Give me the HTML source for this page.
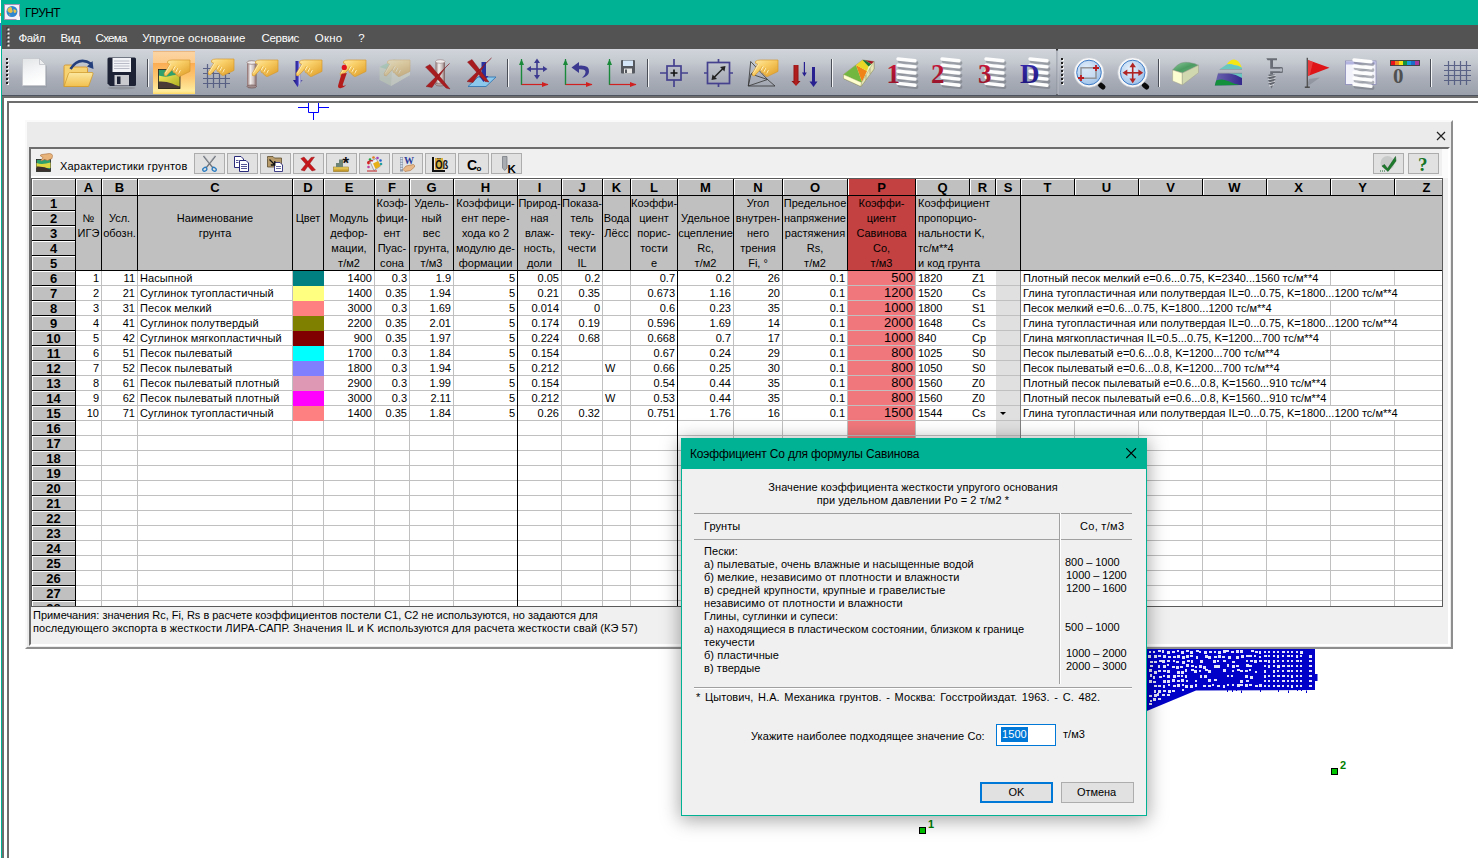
<!DOCTYPE html>
<html lang="ru"><head><meta charset="utf-8"><title>ГРУНТ</title>
<style>
html,body{margin:0;padding:0;}
body{width:1478px;height:858px;overflow:hidden;position:relative;background:#fff;font-family:"Liberation Sans",sans-serif;font-size:11px;color:#000;}
div,span{box-sizing:border-box;}
.abs{position:absolute;}
#title{position:absolute;left:1px;top:0;width:1477px;height:25px;background:#00b294;}
#title .t{position:absolute;left:24px;top:6px;font-size:12px;line-height:15px;color:#000;letter-spacing:-0.55px;}
#menu{position:absolute;left:2px;top:25px;width:1476px;height:24px;background:#535353;color:#fff;font-size:11.5px;}
#menu span{position:absolute;top:5.500px;line-height:14px;white-space:nowrap;}
#tb{position:absolute;left:2px;top:49px;width:1476px;height:47px;background:linear-gradient(#d6dae0 0,#cfd3d9 4%,#c4c9d0 28%,#a9aeb8 62%,#9aa0ab 100%);}
#lb{position:absolute;left:1px;top:25px;width:1px;height:833px;background:#00b294;}
.grip{position:absolute;width:3px;background-image:repeating-linear-gradient(#222 0,#222 2px,transparent 2px,transparent 4px);}
#mdi{position:absolute;left:2px;top:96px;width:1476px;height:762px;background:#fff;border-left:2px solid #6d6d6d;border-top:2px solid #6d6d6d;}
#mdi2{position:absolute;left:7px;top:101px;width:1471px;height:757px;background:#fff;border-left:2px solid #6d6d6d;border-top:2px solid #6d6d6d;}
#frame{position:absolute;left:25px;top:120px;width:1428px;height:529px;background:#ebebec;border:2px solid;border-color:#fafafa #8e8e8e #8e8e8e #fafafa;}
#inner{position:absolute;left:29px;top:147px;width:1421px;height:499px;border:2px solid;border-color:#6d6d6d #fff #fff #6d6d6d;background:#f0f0f0;}
.gb{position:absolute;top:153px;width:31px;height:21px;background:#e1e1e1;border:1px solid #adadad;}
#grid{position:absolute;left:31px;top:178px;width:1412px;height:429px;overflow:hidden;background:#fff;}
#grid div{position:absolute;}
.hc{background:#c0c0c0;}
.hl{font-weight:bold;font-size:13px;text-align:center;line-height:15px;}
.ht{font-size:11px;text-align:center;line-height:15px;white-space:nowrap;}
.c{font-size:11px;line-height:15px;height:15px;white-space:nowrap;}
.r{text-align:right;}
.vl{width:1px;background:#c0c0c0;}
.hline{height:1px;background:#c0c0c0;}
.bl{background:#000;}
#notes{position:absolute;left:31px;top:607px;width:1417px;height:37px;background:#f0f0f0;font-size:11px;line-height:13px;padding:2px 0 0 2px;white-space:nowrap;}
#dlg{position:absolute;left:681px;top:438px;width:466px;height:378px;background:#f0f0f0;border:1px solid #00b294;box-shadow:0 3px 18px 1px rgba(0,0,0,.36);}
#dlg .tt{position:absolute;left:0;top:0;width:464px;height:30px;background:#00b294;}
#dlg .tt span{position:absolute;left:8px;top:8px;font-size:12px;line-height:14px;letter-spacing:-0.18px;}
#dlg div,#dlg span{position:absolute;white-space:nowrap;}
.dl{font-size:11px;line-height:13px;letter-spacing:0.07px;}
</style></head><body>

<div id="title"><span class="t">ГРУНТ</span>
<svg class="abs" style="left:3px;top:4px" width="16" height="16" viewBox="0 0 16 16"><rect x="0.5" y="0.5" width="15" height="15" fill="#f4f0f6" stroke="#a78fb5"/><circle cx="8" cy="7.500" r="5.500" fill="#2f86cf"/><path d="M3.500 5.500c1-2 3-3 4-2 1 1 0 2 1 3s-1 2.500-2 2.500-2-1-3-2z" fill="#e8c04a"/><path d="M9.500 5c1 0 3 1 3 2s-1 2-2 2-1-3-1-4z" fill="#e8c04a"/><path d="M5 10c1 0 1.500 1 1 2z" fill="#e8c04a"/><path d="M12 16l4-4v4z" fill="#f4f0f6"/></svg>
</div>
<div id="lb"></div><div class="abs" style="left:0;top:23px;width:1px;height:23px;background:#2a78d8"></div><div class="abs" style="left:0;top:13px;width:1px;height:3px;background:#f0a030"></div>
<div id="menu"><svg style="position:absolute;left:4px;top:2px" width="4" height="22" viewBox="0 0 4 22"><rect x="0.500" y="0.5" width="2" height="2" fill="#2a2a2a"/><rect x="1.500" y="1.5" width="2" height="2" fill="#f0f0f0"/><rect x="0.500" y="4.5" width="2" height="2" fill="#2a2a2a"/><rect x="1.500" y="5.5" width="2" height="2" fill="#f0f0f0"/><rect x="0.500" y="8.5" width="2" height="2" fill="#2a2a2a"/><rect x="1.500" y="9.5" width="2" height="2" fill="#f0f0f0"/><rect x="0.500" y="12.5" width="2" height="2" fill="#2a2a2a"/><rect x="1.500" y="13.5" width="2" height="2" fill="#f0f0f0"/><rect x="0.500" y="16.5" width="2" height="2" fill="#2a2a2a"/><rect x="1.500" y="17.5" width="2" height="2" fill="#f0f0f0"/></svg>
<span style="left:16.5px;letter-spacing:-0.45px">Файл</span>
<span style="left:58.4px;letter-spacing:-0.33px">Вид</span>
<span style="left:93.6px;letter-spacing:-0.70px">Схема</span>
<span style="left:140.2px;letter-spacing:0.12px">Упругое основание</span>
<span style="left:259.5px;letter-spacing:-0.31px">Сервис</span>
<span style="left:312.7px;letter-spacing:0.27px">Окно</span>
<span style="left:356.2px;letter-spacing:0.00px">?</span>
</div>
<div id="tb"><svg style="position:absolute;left:0;top:0" width="1476" height="47" viewBox="2 49 1476 47">
<defs>
<linearGradient id="gHand" x1="0" y1="0" x2="1" y2="1"><stop offset="0" stop-color="#ffeeae"/><stop offset=".4" stop-color="#f9cf68"/><stop offset="1" stop-color="#de9a22"/></linearGradient>
<linearGradient id="gPress" x1="0" y1="0" x2="0" y2="1"><stop offset="0" stop-color="#fbd5a6"/><stop offset=".27" stop-color="#fccb8c"/><stop offset=".29" stop-color="#fbad54"/><stop offset=".6" stop-color="#fdc66f"/><stop offset=".93" stop-color="#feec9e"/><stop offset="1" stop-color="#ffd865"/></linearGradient>
<linearGradient id="gPage" x1="0" y1="0" x2="0.300" y2="1"><stop offset="0" stop-color="#e2e5e7"/><stop offset=".6" stop-color="#f6f7f8"/><stop offset="1" stop-color="#ffffff"/></linearGradient>
<linearGradient id="gFold" x1="0" y1="0" x2="0" y2="1"><stop offset="0" stop-color="#fbe7a1"/><stop offset="1" stop-color="#f2c14e"/></linearGradient>
<linearGradient id="gCyl" x1="0" y1="0" x2="1" y2="0"><stop offset="0" stop-color="#8a6a6a"/><stop offset=".35" stop-color="#f4f0f0"/><stop offset=".7" stop-color="#c9bcbc"/><stop offset="1" stop-color="#7a5c5c"/></linearGradient>
<linearGradient id="gBlueArr" x1="0" y1="0" x2="1" y2="0"><stop offset="0" stop-color="#1c1478"/><stop offset=".5" stop-color="#3a34b4"/><stop offset=".7" stop-color="#c8c8f0"/><stop offset="1" stop-color="#1c1478"/></linearGradient>
<linearGradient id="gRedArr" x1="0" y1="0" x2="1" y2="0"><stop offset="0" stop-color="#7a0c0c"/><stop offset=".5" stop-color="#b82020"/><stop offset="1" stop-color="#7a0c0c"/></linearGradient>
<linearGradient id="gNum" x1="0" y1="0" x2="0" y2="1"><stop offset="0" stop-color="#d4143c"/><stop offset="1" stop-color="#8c1428"/></linearGradient>
<linearGradient id="gD" x1="0" y1="0" x2="0" y2="1"><stop offset="0" stop-color="#3a2cb4"/><stop offset="1" stop-color="#1c1478"/></linearGradient>
<radialGradient id="gGlass" cx=".4" cy=".35" r=".7"><stop offset="0" stop-color="#e8f2fc"/><stop offset="1" stop-color="#9cc0e8"/></radialGradient>
<linearGradient id="gSoilY" x1="0" y1="0" x2="1" y2="1"><stop offset="0" stop-color="#f0e860"/><stop offset="1" stop-color="#a8a818"/></linearGradient>
<g id="hand"><path d="M167.600 61.300 Q166.300 63.600 169.800 64.200 L164.300 73.300 Q163.600 76.400 166.400 75.900 L172.400 69.400 L173.400 72.600 L175.200 73 L176 74.800 L177.400 75.200 L177.800 76.200 Q179.400 77 181.400 75.600 L190 71.400 L190 60 L172.400 60 Q169 60 167.600 61.300Z" fill="url(#gHand)" stroke="#d49a30" stroke-width=".7"/><path d="M175.300 66.300L172.900 70.300M177.700 68.200L175.900 71.800M180.400 70L178.700 73.400" stroke="#fff4c8" stroke-width=".9" fill="none"/><path d="M174.300 66L171.900 70M176.700 67.900L174.900 71.500M179.400 69.700L177.700 73.100" stroke="#d69a30" stroke-width=".7" fill="none" opacity=".8"/><path d="M170.500 64.300L165.200 73.400" stroke="#fff6d0" stroke-width="1" opacity=".7"/></g>
<g id="spring">
 <g stroke="#6e727a" stroke-width="3.800" stroke-linecap="round" opacity=".5"><path d="M4 5L21 7M4 11L21 13M4 17.500L21 19.500M4 23.500L21 25.500M4 29.500L21 31"/></g>
 <g stroke="#9ea2aa" stroke-width="2.600" opacity=".9"><path d="M19 5L5 9.500M19 11L5 15.500M19 17L5 21.500M19 23L5 27.500"/></g>
 <g stroke="#fdfdfd" stroke-width="3.400" stroke-linecap="round"><path d="M2.500 3L19.500 4.800M2.500 9.100L19.500 10.900M2.500 15.200L19.500 17M2.500 21.300L19.500 23.100M2.500 27.400L19.500 29.200"/></g>
</g>
<g id="axes"><path d="M0.500 0V25.500H27" fill="none" stroke="#1a8a3a" stroke-width="1.2"/><path d="M0.500 25.500H27" stroke="#d02020" stroke-width="1.2"/><path d="M0.500 0L-2 6H3Z" fill="#1a8a3a"/><path d="M27.500 25.500L21 23V28Z" fill="#d02020"/><path d="M0.500 6V25.500" stroke="#1a8a3a" stroke-width="1.2"/></g>
<g id="sep"><rect x="0" y="0" width="1" height="28" fill="#4a4e57"/><rect x="1" y="0" width="1" height="28" fill="#f4f5f7"/></g>
</defs>
<!-- toolbar gripper -->
<g fill="#202020"><rect x="6" y="58" width="2" height="2"/><rect x="6" y="62" width="2" height="2"/><rect x="6" y="66" width="2" height="2"/><rect x="6" y="70" width="2" height="2"/><rect x="6" y="74" width="2" height="2"/><rect x="6" y="78" width="2" height="2"/><rect x="6" y="82" width="2" height="2"/></g>
<g fill="#f4f4f4"><rect x="7" y="59" width="2" height="2"/><rect x="7" y="63" width="2" height="2"/><rect x="7" y="67" width="2" height="2"/><rect x="7" y="71" width="2" height="2"/><rect x="7" y="75" width="2" height="2"/><rect x="7" y="79" width="2" height="2"/><rect x="7" y="83" width="2" height="2"/></g>
<g fill="#202020"><rect x="6" y="58" width="2" height="2"/><rect x="6" y="62" width="2" height="2"/><rect x="6" y="66" width="2" height="2"/><rect x="6" y="70" width="2" height="2"/><rect x="6" y="74" width="2" height="2"/><rect x="6" y="78" width="2" height="2"/><rect x="6" y="82" width="2" height="2"/></g>
<!-- New -->
<path d="M23.500 60.500V87.500H47V66L40 60.500Z" fill="#8a8e98" opacity=".35"/>
<path d="M22.500 58.500H39.500L45.500 64.500V85.500H22.500Z" fill="url(#gPage)" stroke="#c4c6cc" stroke-width=".8"/>
<path d="M39.500 58.500V64.500H45.500Z" fill="#eceef0" stroke="#b8bac0" stroke-width=".7"/>
<!-- Open -->
<path d="M64 86.500V66.500Q64 65 65.500 65H72L74 67H86Q87.500 67 87.500 68.500V86.500Z" fill="#f6d272" stroke="#d49530" stroke-width=".9"/>
<path d="M64 86.500L68.500 73.500Q69 72.500 70.500 72.500H92Q93.500 72.500 93 74L88.500 86.500Z" fill="url(#gFold)" stroke="#d09c30" stroke-width=".8"/>
<path d="M70.500 69Q79 56 91.500 64" fill="none" stroke="#243f7c" stroke-width="2.600"/>
<path d="M93.500 69L87 66.500L92.500 61Z" fill="#243f7c"/>
<!-- Save -->
<path d="M107.500 59Q107.500 57.500 109 57.500H134.500Q136 57.500 136 59V84.500Q136 86 134.500 86H110L107.500 83.500Z" fill="#1d2234"/>
<rect x="112.500" y="58" width="18.500" height="14" fill="#f2f3f6"/>
<path d="M114 61H129.500M114 63.500H129.500M114 66H129.500M114 68.500H129.500" stroke="#b9bcc6" stroke-width="1"/>
<rect x="114.500" y="75" width="14.500" height="10.500" fill="#c9cacf"/><rect x="117" y="76.500" width="3.500" height="7.500" fill="#1d2234"/>
<ellipse cx="121.500" cy="88" rx="14" ry="1.500" fill="#555" opacity=".25"/>
<use href="#sep" x="147" y="59"/>
<!-- pressed button 1 -->
<rect x="153" y="51" width="42" height="43" fill="url(#gPress)"/>
<rect x="153" y="51" width="42" height="1" fill="#e8b078" opacity=".8"/>
<!-- soil icon -->
<rect x="158.500" y="69.500" width="21.500" height="19" fill="#2fa06c"/>
<path d="M158.500 75.500Q165 77.500 170 76T180 75.500V89H158.500Z" fill="url(#gSoilY)"/>
<path d="M158.500 81.500Q166 81 172 83.500T180 86.500V88.500H158.500Z" fill="#4a3b36"/>
<rect x="158.500" y="69.500" width="21.500" height="19" fill="none" stroke="#1c1c1c" stroke-width=".8"/>
<use href="#hand"/>
<!-- grid + hand -->
<g stroke="#4b547c" stroke-width="1.200" opacity=".85"><path d="M207.500 64V88M213.500 72V88M219.500 74V88M225.500 74V88M203 68.500H211M203 73.500H230M203 78.500H230M203 83.500H230"/></g>
<use href="#hand" x="44" y="-1"/>
<!-- cylinder + hand -->
<rect x="247" y="62.500" width="9.500" height="24" fill="url(#gCyl)"/><ellipse cx="251.750" cy="86.500" rx="4.750" ry="1.600" fill="#a08c8c" stroke="#6a4c4c" stroke-width=".6"/><ellipse cx="251.750" cy="62.500" rx="4.750" ry="1.800" fill="#f0ecec" stroke="#7a6060" stroke-width=".6"/>
<use href="#hand" x="88"/>
<!-- blue arrow + hand -->
<path d="M295.500 61H300.500V80H302.500L297.500 87L293 80H295.500Z" fill="url(#gBlueArr)"/>
<use href="#hand" x="132"/>
<!-- i + hand -->
<use href="#hand" x="176"/>
<circle cx="344.300" cy="67.400" r="2.600" fill="#e0141e"/>
<path d="M341.500 73.800L346.800 73L342.800 84.500Q342.300 86.600 344.800 85.600L346.300 84.800Q343.300 88.800 339.800 88.300Q337.300 87.800 338.300 84.800L340.800 76.300Z" fill="#b41c1c"/>
<!-- disabled block + hand -->
<g opacity=".42"><path d="M379.500 67L394 59.500L410 62V75L391 86L379.500 80Z" fill="#c9d6b8"/><path d="M379.500 67L394 59.500L410 62L392 71Z" fill="#8fc4a0"/><path d="M392 71L410 62V75L391 86Z" fill="#e4e8d0"/><use href="#hand" x="220"/></g>
<!-- delete cylinder -->
<rect x="435.500" y="61.500" width="9.500" height="23" fill="url(#gCyl)"/><ellipse cx="440.250" cy="84.500" rx="4.750" ry="1.600" fill="#b0a0a0" stroke="#6a4c4c" stroke-width=".5"/><ellipse cx="440.250" cy="61.500" rx="4.750" ry="1.800" fill="#f0ecec" stroke="#8a7070" stroke-width=".5"/>
<g fill="#a81c20" stroke="#801014" stroke-width=".4"><path d="M425.500 67L430 64.500L450 89L446 88Z"/><path d="M449.500 63.500L445 68L432 87.500L426 86.500Z"/></g>
<!-- delete load -->
<path d="M468 86.500L478 77H496L486 86.500Z" fill="#8cc8ec" stroke="#2870b0" stroke-width=".8"/>
<path d="M481.500 62H486V76H488.500L483.500 82L479 76H481.500Z" fill="#2830a0"/>
<g fill="#a81c20" stroke="#801014" stroke-width=".4"><path d="M467.500 62L472 59.500L489 82L485 81.500Z"/><path d="M491.500 58L486 63L473 82.500L467 81.500Z"/></g>
<use href="#sep" x="507" y="59"/>
<!-- axes + move -->
<use href="#axes" x="521" y="59"/>
<g fill="#3c3a90"><path d="M536.200 62H537.800V76H536.200Z"/><path d="M530 68.200H544V69.800H530Z"/><path d="M537 58.500L540 63H534Z"/><path d="M537 79.500L540 75H534Z"/><path d="M526.500 69L531 66V72Z"/><path d="M547.500 69L543 66V72Z"/></g>
<!-- axes + undo -->
<use href="#axes" x="565" y="59"/>
<path d="M576 66Q590 64 589 72Q588.500 76 582 78Q586 74 585.500 71.500Q585 68.500 576 69.500Z" fill="#3c3a90"/><path d="M571.500 67.500L579 62V73Z" fill="#3c3a90"/>
<!-- axes + floppy -->
<use href="#axes" x="609" y="59"/>
<rect x="621" y="60" width="14" height="13.500" rx="1" fill="#55585f"/><rect x="623" y="60.500" width="10" height="5.500" fill="#d4e6f8"/><rect x="624" y="68.500" width="8" height="5" fill="#e4e4e4"/><rect x="625" y="69.500" width="2" height="3.500" fill="#55585f"/>
<use href="#sep" x="647" y="59"/>
<!-- crosshair square -->
<g stroke="#45418f" stroke-width="1.700" fill="none"><rect x="667" y="66" width="14" height="14"/><path d="M660 73H667M681 73H688M674 59V66M674 80V87"/></g>
<path d="M670.500 73H677.500M674 69.500V76.500" stroke="#111" stroke-width="1.600"/>
<!-- big square with arrow -->
<g stroke="#45418f" stroke-width="1.700" fill="none"><rect x="707.500" y="62.500" width="22" height="21"/><path d="M704 73H707M730 73H733M718.500 59V62M718.500 84V87"/></g>
<path d="M713.500 78L723.500 68" stroke="#222" stroke-width="1.600"/><path d="M725.500 66L724.500 71.500L720 67Z" fill="#222"/><path d="M711.500 80L712.500 74.500L717 79Z" fill="#222"/>
<!-- wire mesh + hand -->
<g stroke="#333" stroke-width=".8" fill="none"><path d="M750.700 61.500L748.300 86H775L767.500 79.500L750.700 61.500M748.300 86L767.500 79.500M751 74L767.500 79.500M751 74L748.300 86M751 74L757 68"/></g>
<use href="#hand" x="588"/>
<!-- arrows -->
<path d="M793.500 65H798.500V81H800.500L796 86L791.500 81H793.500Z" fill="url(#gRedArr)"/>
<path d="M803.800 62H805V72.500H806.800L804.400 76.500L802 72.500H803.800Z" fill="#282090"/>
<path d="M812 67H815V81.500H817.500L813.500 87L809.500 81.500H812Z" fill="#282090"/>
<use href="#sep" x="831" y="59"/>
<!-- 3D colored block -->
<path d="M843.500 74.500L862.500 60L874 61.500V69L861 86.500L843.500 78.500Z" fill="#f4f4c4" stroke="#777750" stroke-width=".5"/>
<path d="M843.500 74.500L856 65L862 82L861 82.500Z" fill="#72b840"/>
<path d="M856 65L867 71L862 82Z" fill="#f08418"/>
<path d="M856 65L862.500 60L868.500 66.500L867 71Z" fill="#ead624"/>
<path d="M862.500 60L865 60.300L871.500 64L868.500 66.500Z" fill="#1c7434"/>
<path d="M865 60.300L874 61.500L871.500 64Z" fill="#a01424"/>
<path d="M843.500 74.500L861.500 82.500L861 86.500L843.500 78.500Z" fill="#ffffd0" stroke="#8a8a60" stroke-width=".4"/>
<path d="M861.500 82.500L874 61.500V69L861 86.500Z" fill="#e6e6b4" stroke="#8a8a60" stroke-width=".4"/>
<path d="M866 75V80M870 68.500V74" stroke="#8a8a60" stroke-width=".6"/>
<!-- springs with numbers -->
<use href="#spring" x="895.500" y="56"/><use href="#spring" x="939.500" y="56"/><use href="#spring" x="983.500" y="56"/><use href="#spring" x="1027.500" y="56"/>
<g font-family="'Liberation Serif',serif" font-weight="bold" font-size="27"><text x="886.500" y="82.500" fill="url(#gNum)">1</text><text x="931" y="82.500" fill="url(#gNum)">2</text><text x="978" y="82.500" fill="url(#gNum)">3</text><text x="1020" y="82.500" fill="url(#gD)">D</text></g>
<!-- toolbar boundary -->
<rect x="1056.500" y="49" width="1" height="47" fill="#8c919b"/><rect x="1057.500" y="49" width="1" height="47" fill="#c4c8cf" opacity=".7"/><rect x="1056" y="49" width="2" height="1.500" fill="#333"/><rect x="1056" y="94.500" width="2" height="1.500" fill="#333"/>
<g fill="#f4f4f4"><rect x="1062" y="59" width="2" height="2"/><rect x="1062" y="63" width="2" height="2"/><rect x="1062" y="67" width="2" height="2"/><rect x="1062" y="71" width="2" height="2"/><rect x="1062" y="75" width="2" height="2"/><rect x="1062" y="79" width="2" height="2"/><rect x="1062" y="83" width="2" height="2"/></g>
<g fill="#202020"><rect x="1061" y="58" width="2" height="2"/><rect x="1061" y="62" width="2" height="2"/><rect x="1061" y="66" width="2" height="2"/><rect x="1061" y="70" width="2" height="2"/><rect x="1061" y="74" width="2" height="2"/><rect x="1061" y="78" width="2" height="2"/><rect x="1061" y="82" width="2" height="2"/></g>
<!-- zoom window -->
<path d="M1100.500 85L1103 87" stroke="#0a0a0a" stroke-width="5" stroke-linecap="round"/>
<circle cx="1089" cy="72.500" r="15" fill="#f7f7f8" stroke="#c0c4cb" stroke-width=".7"/>
<circle cx="1089" cy="72.500" r="12.300" fill="url(#gGlass)" stroke="#3f7cc6" stroke-width="1"/>
<rect x="1081" y="67.800" width="15" height="10.400" fill="#cfe0f2" fill-opacity=".6" stroke="#8e8e90" stroke-width="1.400"/>
<path d="M1093 68H1099M1096 65V71M1078 78H1084M1081 75V81" stroke="#b81c20" stroke-width="1.800"/>
<!-- zoom pan -->
<path d="M1144.200 85L1146.700 87" stroke="#0a0a0a" stroke-width="5" stroke-linecap="round"/>
<circle cx="1132.700" cy="72.500" r="15" fill="#f7f7f8" stroke="#c0c4cb" stroke-width=".7"/>
<circle cx="1132.700" cy="72.500" r="12.300" fill="url(#gGlass)" stroke="#3f7cc6" stroke-width="1"/>
<g fill="#b02424"><path d="M1131.900 66H1133.500V79.500H1131.900Z"/><path d="M1126 72H1139.500V73.600H1126Z"/><path d="M1132.700 62.500L1135.900 67.300H1129.500Z"/><path d="M1132.700 83.300L1135.900 78.500H1129.500Z"/><path d="M1122.500 72.800L1127.300 69.600V76Z"/><path d="M1143.200 72.800L1138.400 69.600V76Z"/></g>
<use href="#sep" x="1158" y="59"/>
<!-- green block -->
<defs><linearGradient id="gTopG" x1="0" y1="0" x2="1" y2="1"><stop offset="0" stop-color="#8cc89c"/><stop offset=".5" stop-color="#4c9c62"/><stop offset="1" stop-color="#6cb480"/></linearGradient>
<linearGradient id="gPurp" x1="0" y1="0" x2="1" y2="0"><stop offset="0" stop-color="#6c64b0"/><stop offset="1" stop-color="#34288c"/></linearGradient></defs>
<path d="M1172.600 70Q1177 64.500 1181 63Q1185 61.800 1189 62.400Q1194 63.200 1198.500 65.200L1182.300 73.100Z" fill="url(#gTopG)" stroke="#7c8c7c" stroke-width=".4"/>
<path d="M1172.600 70L1182.300 73.100V85L1172.600 81Z" fill="#fdfdd2" stroke="#a0a088" stroke-width=".5"/>
<path d="M1182.300 73.100L1198.500 65.200V72.700L1182.300 85Z" fill="#d0d8b0" stroke="#a0a088" stroke-width=".5"/>
<!-- layers -->
<path d="M1226.700 64.500Q1230 59.500 1234.200 59.500Q1239 60 1242 67.800Q1238 65 1234 65Q1230 63.500 1226.700 64.500Z" fill="#f6e614"/>
<path d="M1219.600 69.300L1226.700 64.500Q1230 63.500 1234 65Q1238 65 1242 67.800V69.300Z" fill="#68c8c0"/>
<path d="M1219.600 69.500H1242" stroke="#8c9098" stroke-width=".6"/>
<path d="M1218 73.200H1242V85L1214.800 85.400Z" fill="url(#gPurp)"/>
<path d="M1229 73.200H1242V78Q1236 74.500 1229 73.200Z" fill="#68c8c0"/>
<path d="M1216.200 80.500Q1222 78.200 1228 81Q1234 84 1240 85L1214.800 85.400Z" fill="#14903c"/>
<path d="M1218 73.200H1242" stroke="#8c9098" stroke-width=".6"/>
<!-- drill -->
<g fill="#686c74"><path d="M1266.300 58.200H1277V60.200H1273V67H1281.500Q1283 67 1283 68.500V71.500Q1283 73 1281.500 73H1273V74.500H1270.200V71.200H1280.500V68.800H1270.200V60.200H1267.500Z"/><path d="M1268.500 74.500H1274.800L1274 83L1271.600 88.500L1269.300 83Z"/></g>
<path d="M1267.500 77L1275.800 75.500M1267.800 80L1275.500 78.500M1268.200 83L1275 81.500M1269 86L1274 84.500" stroke="#d8dade" stroke-width="1"/>
<path d="M1267.500 77.800L1275.800 76.300M1267.800 80.800L1275.500 79.300M1268.200 83.800L1275 82.300" stroke="#50545c" stroke-width=".7"/>
<rect x="1280" y="68.500" width="2.200" height="3" fill="#b4b8c0"/>
<!-- flag -->
<path d="M1309 79L1320 77.500L1306.500 87Z" fill="#60646c" opacity=".3"/>
<path d="M1308 60L1329.500 67.800L1308 76Z" fill="#de1418"/><path d="M1308 60L1313 62L1310 74.500L1308 76Z" fill="#f05050" opacity=".6"/>
<rect x="1306.600" y="57.800" width="1.400" height="29.500" fill="#555"/><rect x="1304.800" y="86.500" width="5" height="1.400" fill="#444"/>
<!-- window + spring -->
<rect x="1345.500" y="61" width="30.500" height="23.500" fill="#f2f2fa" stroke="#8c8cb8" stroke-width=".8"/><rect x="1346" y="61.500" width="29.500" height="3" fill="#b4b4e0"/>
<use href="#spring" x="1351.500" y="57"/>
<!-- colour bar -->
<rect x="1390" y="60" width="30" height="6" fill="#444"/>
<rect x="1391" y="61" width="4" height="4" fill="#e8141c"/><rect x="1395" y="61" width="4" height="4" fill="#f08418"/><rect x="1399" y="61" width="4" height="4" fill="#f4e414"/><rect x="1403" y="61" width="4" height="4" fill="#14943c"/><rect x="1407" y="61" width="4" height="4" fill="#149cdc"/><rect x="1411" y="61" width="4" height="4" fill="#1c6cc8"/><rect x="1415" y="61" width="4" height="4" fill="#a8389c"/>
<text x="1393" y="82.500" font-family="'Liberation Serif',serif" font-weight="bold" font-size="21" fill="#505050">0</text>
<use href="#sep" x="1430" y="59"/>
<!-- grid icon -->
<g stroke="#4b547c" stroke-width="1.200" opacity=".85"><path d="M1448.500 61V85M1454.500 61V85M1460.500 61V85M1466.500 61V85M1444 65.500H1471M1444 70.500H1471M1444 75.500H1471M1444 80.500H1471"/></g>
</svg>
</div>
<div class="abs" style="left:2px;top:95px;width:1476px;height:1px;background:#4e545f"></div>
<div id="mdi"></div><div id="mdi2"></div>
<svg class="abs" style="left:296px;top:102px" width="36" height="20" viewBox="296 102 36 20"><path d="M298 107.500H308M319 107.500H329M308.500 103V112.500H318.500V103M313.500 112.500V120" fill="none" stroke="#0000ff" stroke-width="1"/></svg>
<div id="frame"></div>
<svg class="abs" style="left:1436px;top:131px" width="10" height="10" viewBox="0 0 10 10"><path d="M1 1l8 8M9 1l-8 8" stroke="#222" stroke-width="1.2"/></svg>
<div id="inner"></div>
<div class="abs" style="left:31px;top:176px;width:1417px;height:2px;background:#fff"></div><div class="abs" style="left:1442px;top:149px;width:6px;height:29px;background:#fbfbfb"></div>
<div class="abs" style="left:60px;top:160px;font-size:11px;line-height:13px;white-space:nowrap;letter-spacing:0.2px" id="hlabel">Характеристики грунтов</div>
<div class="gb" style="left:194px"></div>
<div class="gb" style="left:227px"></div>
<div class="gb" style="left:260px"></div>
<div class="gb" style="left:293px"></div>
<div class="gb" style="left:326px"></div>
<div class="gb" style="left:359px"></div>
<div class="gb" style="left:392px"></div>
<div class="gb" style="left:425px"></div>
<div class="gb" style="left:458px"></div>
<div class="gb" style="left:491px"></div>
<div class="gb" style="left:1373px"></div><div class="gb" style="left:1408px"></div>
<svg class="abs" style="left:30px;top:150px" width="1412" height="27" viewBox="30 150 1412 27">
<defs><linearGradient id="gGold" x1="0" y1="0" x2="0" y2="1"><stop offset="0" stop-color="#f4dc70"/><stop offset="1" stop-color="#b88a18"/></linearGradient></defs>
<!-- window icon: soil + hand -->
<rect x="36.500" y="159.500" width="14" height="12" fill="#2fa06c" stroke="#222" stroke-width=".8"/><path d="M36.500 163Q42 165 50.500 162.500V168H36.500Z" fill="#e0d840"/><path d="M36.500 166.500Q44 166 50.500 169.500V171.500H36.500Z" fill="#3c302c"/>
<path d="M40.500 156Q40 154.500 42 154.500L49.500 153.500Q52 153.500 52.500 155.500L52 158.500L47.500 160.500L44.500 159.500L41.500 161Q40.500 160.500 41.500 159.500L43 157.500Z" fill="#e8b47c" stroke="#a86c38" stroke-width=".6"/>
<!-- scissors -->
<path d="M203.500 156L213 168M215.500 156L206 168" stroke="#70747c" stroke-width="1.300" fill="none"/>
<path d="M204.500 156L209.500 163L214.500 156" stroke="#b4b8c0" stroke-width=".6" fill="none"/>
<ellipse cx="204.800" cy="169.300" rx="2.200" ry="1.700" fill="none" stroke="#2c7cc0" stroke-width="1.300" transform="rotate(-35 204.800 169.300)"/>
<ellipse cx="214.200" cy="169.300" rx="2.200" ry="1.700" fill="none" stroke="#2c7cc0" stroke-width="1.300" transform="rotate(35 214.200 169.300)"/>
<!-- copy -->
<path d="M234.500 156.500H241L243.500 159V167.500H234.500Z" fill="#fff" stroke="#2a2a7a" stroke-width="1"/>
<path d="M239.500 160.500H246L248.500 163V171.500H239.500Z" fill="#fff" stroke="#2a2a7a" stroke-width="1"/>
<path d="M241 164.500H247M241 166.500H247M241 168.500H247M236 160.500H238.500M236 162.500H238.500" stroke="#2a2a7a" stroke-width=".8"/>
<!-- paste-like -->
<path d="M267.500 158.500V156.500H273L274.500 158H281.500V167H267.500Z" fill="#b89c6c" stroke="#5c4c30" stroke-width=".8"/>
<path d="M274.500 162.500H280L282.500 165V171.500H274.500Z" fill="#fff" stroke="#2a2a7a" stroke-width=".9"/><path d="M276 166.500H281M276 168.500H281" stroke="#2a2a7a" stroke-width=".7"/>
<path d="M269.500 159.500L274.500 164.500M274.800 161V165H270.800" stroke="#111" stroke-width="1.300" fill="none"/>
<!-- red X -->
<g fill="#c8181c" stroke="#8c1014" stroke-width=".4"><path d="M300.800 158.500L304 157L315.500 170L312 171Z"/><path d="M314.500 157L311 157.500L301 170L304.500 171Z"/></g>
<!-- add row -->
<rect x="333.500" y="167" width="15" height="4.500" fill="url(#gGold)" stroke="#8c6c10" stroke-width=".5"/>
<path d="M336 167V163H339V159.500H343V167Z" fill="#6c8478"/>
<text x="342.500" y="168.500" font-family="'Liberation Sans',sans-serif" font-size="17" font-weight="bold" fill="#111">*</text>
<!-- paint bucket -->
<g><circle cx="368.500" cy="163" r="1.400" fill="#e02020"/><circle cx="370" cy="159.500" r="1.300" fill="#20a040"/><circle cx="373.500" cy="157.500" r="1.300" fill="#e07820"/><circle cx="377.500" cy="158" r="1.300" fill="#a040c0"/><circle cx="380.500" cy="160.500" r="1.300" fill="#2060d0"/><circle cx="381" cy="164" r="1.300" fill="#20a0a0"/><circle cx="368.500" cy="167" r="1.300" fill="#c040a0"/></g>
<path d="M370 161.500L376 158.500L380.500 166L374 170.500Z" fill="#f0f0f4" stroke="#80848c" stroke-width=".7"/><path d="M373 163.500L378 161L380.500 166L375.500 169Z" fill="#e8b018"/><path d="M367 171H377" stroke="#c02020" stroke-width="1"/>
<path d="M367.500 162.500Q370 160 373 161" fill="none" stroke="#c02020" stroke-width="1.200"/>
<!-- film + W + hand -->
<rect x="400" y="157" width="3" height="14.500" fill="#8c98a8"/><path d="M400.500 158.500H402.500M400.500 161H402.500M400.500 163.500H402.500M400.500 166H402.500M400.500 168.500H402.500" stroke="#dce8f8" stroke-width="1.300"/>
<text x="404" y="164" font-family="'Liberation Serif',serif" font-size="10" font-weight="bold" fill="#2c3c9c">W</text>
<path d="M403 169.500L406 166L413.500 164.500Q415 165 414.500 167L410.500 170.500L405 171.500Z" fill="#e8b888" stroke="#a87040" stroke-width=".6"/>
<!-- OB -->
<path d="M433 157V171H445" stroke="#111" stroke-width="2" fill="none"/><rect x="435" y="158" width="8" height="11.500" fill="#d8b040"/>
<text x="435.200" y="169" font-family="'Liberation Sans',sans-serif" font-size="12" font-weight="bold" fill="#111" textLength="13" lengthAdjust="spacingAndGlyphs">Öß</text>
<!-- Co -->
<text x="467" y="169.500" font-family="'Liberation Sans',sans-serif" font-size="14" font-weight="bold" fill="#000">C</text><text x="476.500" y="171" font-family="'Liberation Sans',sans-serif" font-size="8" font-weight="bold" fill="#000">o</text>
<!-- pile K -->
<path d="M502.500 156.500H507V168L504.700 170.500L502.500 168Z" fill="#a8acb0" stroke="#70747c" stroke-width=".7"/>
<text x="507.500" y="172.500" font-family="'Liberation Sans',sans-serif" font-size="11.500" font-weight="bold" fill="#000">K</text>
<!-- check -->
<circle cx="1387.500" cy="163" r="7" fill="#b4b8b8" opacity=".55"/>
<path d="M1382 166L1384.500 164.500L1387.500 168.500L1395.500 156.500L1396 161L1388 171.500Z" fill="#1c7c2c" stroke="#0c4c18" stroke-width=".5"/>
<path d="M1380 171H1381M1382 171H1383M1384 171H1385" stroke="#1c6c2c" stroke-width="1"/>
<!-- ? -->
<text x="1418" y="171" font-family="'Liberation Serif',serif" font-size="19" font-weight="bold" fill="#167424">?</text>
</svg>

<div id="grid">
<div class="hc" style="left:0px;top:0px;width:1411px;height:93px;"></div>
<div class="hc" style="left:0px;top:0px;width:45px;height:430px;"></div>
<div class="" style="left:1px;top:1px;width:1410px;height:1px;background:#fff"></div>
<div class="" style="left:1px;top:1px;width:1px;height:428px;background:#fff"></div>
<div class="" style="left:817px;top:1px;width:67px;height:92px;background:#c44141"></div>
<div class="" style="left:817px;top:93px;width:67px;height:180px;background:#f0787c"></div>
<div class="" style="left:965px;top:93px;width:24px;height:180px;background:#e0e0e0"></div>
<div class="hline" style="left:45px;top:107px;width:1366px;height:1px;"></div>
<div class="hline" style="left:45px;top:122px;width:1366px;height:1px;"></div>
<div class="hline" style="left:45px;top:137px;width:1366px;height:1px;"></div>
<div class="hline" style="left:45px;top:152px;width:1366px;height:1px;"></div>
<div class="hline" style="left:45px;top:167px;width:1366px;height:1px;"></div>
<div class="hline" style="left:45px;top:182px;width:1366px;height:1px;"></div>
<div class="hline" style="left:45px;top:197px;width:1366px;height:1px;"></div>
<div class="hline" style="left:45px;top:212px;width:1366px;height:1px;"></div>
<div class="hline" style="left:45px;top:227px;width:1366px;height:1px;"></div>
<div class="hline" style="left:45px;top:242px;width:1366px;height:1px;"></div>
<div class="hline" style="left:45px;top:257px;width:1366px;height:1px;"></div>
<div class="hline" style="left:45px;top:272px;width:1366px;height:1px;"></div>
<div class="hline" style="left:45px;top:287px;width:1366px;height:1px;"></div>
<div class="hline" style="left:45px;top:302px;width:1366px;height:1px;"></div>
<div class="hline" style="left:45px;top:317px;width:1366px;height:1px;"></div>
<div class="hline" style="left:45px;top:332px;width:1366px;height:1px;"></div>
<div class="hline" style="left:45px;top:347px;width:1366px;height:1px;"></div>
<div class="hline" style="left:45px;top:362px;width:1366px;height:1px;"></div>
<div class="hline" style="left:45px;top:377px;width:1366px;height:1px;"></div>
<div class="hline" style="left:45px;top:392px;width:1366px;height:1px;"></div>
<div class="hline" style="left:45px;top:407px;width:1366px;height:1px;"></div>
<div class="hline" style="left:45px;top:422px;width:1366px;height:1px;"></div>
<div class="hline" style="left:45px;top:437px;width:1366px;height:1px;"></div>
<div class="hline" style="left:45px;top:452px;width:1366px;height:1px;"></div>
<div class="vl" style="left:70px;top:93px;width:1px;height:340px;"></div>
<div class="vl" style="left:106px;top:93px;width:1px;height:340px;"></div>
<div class="vl" style="left:261px;top:93px;width:1px;height:340px;"></div>
<div class="vl" style="left:292px;top:93px;width:1px;height:340px;"></div>
<div class="vl" style="left:343px;top:93px;width:1px;height:340px;"></div>
<div class="vl" style="left:378px;top:93px;width:1px;height:340px;"></div>
<div class="vl" style="left:422px;top:93px;width:1px;height:340px;"></div>
<div class="vl" style="left:486px;top:93px;width:1px;height:340px;"></div>
<div class="vl" style="left:530px;top:93px;width:1px;height:340px;"></div>
<div class="vl" style="left:571px;top:93px;width:1px;height:340px;"></div>
<div class="vl" style="left:599px;top:93px;width:1px;height:340px;"></div>
<div class="vl" style="left:646px;top:93px;width:1px;height:340px;"></div>
<div class="vl" style="left:702px;top:93px;width:1px;height:340px;"></div>
<div class="vl" style="left:751px;top:93px;width:1px;height:340px;"></div>
<div class="vl" style="left:816px;top:93px;width:1px;height:340px;"></div>
<div class="vl" style="left:884px;top:93px;width:1px;height:340px;"></div>
<div class="vl" style="left:989px;top:93px;width:1px;height:340px;"></div>
<div class="vl" style="left:1043px;top:93px;width:1px;height:340px;"></div>
<div class="vl" style="left:1107px;top:93px;width:1px;height:340px;"></div>
<div class="vl" style="left:1171px;top:93px;width:1px;height:340px;"></div>
<div class="vl" style="left:1235px;top:93px;width:1px;height:340px;"></div>
<div class="vl" style="left:1299px;top:93px;width:1px;height:340px;"></div>
<div class="vl" style="left:1363px;top:93px;width:1px;height:340px;"></div>
<div class="vl" style="left:1427px;top:93px;width:1px;height:340px;"></div>
<div class="bl" style="left:486px;top:18px;width:1px;height:412px;"></div>
<div class="bl" style="left:646px;top:18px;width:1px;height:412px;"></div>
<div class="bl" style="left:0px;top:17px;width:1411px;height:1px;"></div>
<div class="bl" style="left:0px;top:92px;width:1411px;height:1px;"></div>
<div class="bl" style="left:44px;top:0px;width:1px;height:430px;"></div>
<div class="bl" style="left:70px;top:1px;width:1px;height:92px;"></div>
<div class="" style="left:45px;top:1px;width:1px;height:16px;background:#fff"></div>
<div class="bl" style="left:106px;top:1px;width:1px;height:92px;"></div>
<div class="" style="left:71px;top:1px;width:1px;height:16px;background:#fff"></div>
<div class="bl" style="left:261px;top:1px;width:1px;height:92px;"></div>
<div class="" style="left:107px;top:1px;width:1px;height:16px;background:#fff"></div>
<div class="bl" style="left:292px;top:1px;width:1px;height:92px;"></div>
<div class="" style="left:262px;top:1px;width:1px;height:16px;background:#fff"></div>
<div class="bl" style="left:343px;top:1px;width:1px;height:92px;"></div>
<div class="" style="left:293px;top:1px;width:1px;height:16px;background:#fff"></div>
<div class="bl" style="left:378px;top:1px;width:1px;height:92px;"></div>
<div class="" style="left:344px;top:1px;width:1px;height:16px;background:#fff"></div>
<div class="bl" style="left:422px;top:1px;width:1px;height:92px;"></div>
<div class="" style="left:379px;top:1px;width:1px;height:16px;background:#fff"></div>
<div class="bl" style="left:486px;top:1px;width:1px;height:92px;"></div>
<div class="" style="left:423px;top:1px;width:1px;height:16px;background:#fff"></div>
<div class="bl" style="left:530px;top:1px;width:1px;height:92px;"></div>
<div class="" style="left:487px;top:1px;width:1px;height:16px;background:#fff"></div>
<div class="bl" style="left:571px;top:1px;width:1px;height:92px;"></div>
<div class="" style="left:531px;top:1px;width:1px;height:16px;background:#fff"></div>
<div class="bl" style="left:599px;top:1px;width:1px;height:92px;"></div>
<div class="" style="left:572px;top:1px;width:1px;height:16px;background:#fff"></div>
<div class="bl" style="left:646px;top:1px;width:1px;height:92px;"></div>
<div class="" style="left:600px;top:1px;width:1px;height:16px;background:#fff"></div>
<div class="bl" style="left:702px;top:1px;width:1px;height:92px;"></div>
<div class="" style="left:647px;top:1px;width:1px;height:16px;background:#fff"></div>
<div class="bl" style="left:751px;top:1px;width:1px;height:92px;"></div>
<div class="" style="left:703px;top:1px;width:1px;height:16px;background:#fff"></div>
<div class="bl" style="left:816px;top:1px;width:1px;height:92px;"></div>
<div class="" style="left:752px;top:1px;width:1px;height:16px;background:#fff"></div>
<div class="bl" style="left:884px;top:1px;width:1px;height:92px;"></div>
<div class="" style="left:817px;top:1px;width:1px;height:16px;background:#fff"></div>
<div class="bl" style="left:938px;top:1px;width:1px;height:16px;"></div>
<div class="" style="left:885px;top:1px;width:1px;height:16px;background:#fff"></div>
<div class="bl" style="left:964px;top:1px;width:1px;height:16px;"></div>
<div class="" style="left:939px;top:1px;width:1px;height:16px;background:#fff"></div>
<div class="bl" style="left:989px;top:1px;width:1px;height:92px;"></div>
<div class="" style="left:965px;top:1px;width:1px;height:16px;background:#fff"></div>
<div class="bl" style="left:1043px;top:1px;width:1px;height:16px;"></div>
<div class="" style="left:990px;top:1px;width:1px;height:16px;background:#fff"></div>
<div class="bl" style="left:1107px;top:1px;width:1px;height:16px;"></div>
<div class="" style="left:1044px;top:1px;width:1px;height:16px;background:#fff"></div>
<div class="bl" style="left:1171px;top:1px;width:1px;height:16px;"></div>
<div class="" style="left:1108px;top:1px;width:1px;height:16px;background:#fff"></div>
<div class="bl" style="left:1235px;top:1px;width:1px;height:16px;"></div>
<div class="" style="left:1172px;top:1px;width:1px;height:16px;background:#fff"></div>
<div class="bl" style="left:1299px;top:1px;width:1px;height:16px;"></div>
<div class="" style="left:1236px;top:1px;width:1px;height:16px;background:#fff"></div>
<div class="bl" style="left:1363px;top:1px;width:1px;height:16px;"></div>
<div class="" style="left:1300px;top:1px;width:1px;height:16px;background:#fff"></div>
<div class="bl" style="left:1427px;top:1px;width:1px;height:16px;"></div>
<div class="" style="left:1364px;top:1px;width:1px;height:16px;background:#fff"></div>
<div class="bl" style="left:989px;top:18px;width:1px;height:75px;"></div>
<div class="" style="left:989px;top:93px;width:1px;height:336px;background:#808080"></div>
<div class="bl" style="left:1px;top:32px;width:43px;height:1px;"></div>
<div class="" style="left:2px;top:18px;width:42px;height:1px;background:#fff"></div>
<div class="hl" style="left:1px;top:18px;width:43px;height:14px;">1</div>
<div class="bl" style="left:1px;top:47px;width:43px;height:1px;"></div>
<div class="" style="left:2px;top:33px;width:42px;height:1px;background:#fff"></div>
<div class="hl" style="left:1px;top:33px;width:43px;height:14px;">2</div>
<div class="bl" style="left:1px;top:62px;width:43px;height:1px;"></div>
<div class="" style="left:2px;top:48px;width:42px;height:1px;background:#fff"></div>
<div class="hl" style="left:1px;top:48px;width:43px;height:14px;">3</div>
<div class="bl" style="left:1px;top:77px;width:43px;height:1px;"></div>
<div class="" style="left:2px;top:63px;width:42px;height:1px;background:#fff"></div>
<div class="hl" style="left:1px;top:63px;width:43px;height:14px;">4</div>
<div class="bl" style="left:1px;top:92px;width:43px;height:1px;"></div>
<div class="" style="left:2px;top:78px;width:42px;height:1px;background:#fff"></div>
<div class="hl" style="left:1px;top:78px;width:43px;height:14px;">5</div>
<div class="bl" style="left:1px;top:107px;width:43px;height:1px;"></div>
<div class="" style="left:2px;top:93px;width:42px;height:1px;background:#fff"></div>
<div class="hl" style="left:1px;top:93px;width:43px;height:14px;">6</div>
<div class="bl" style="left:1px;top:122px;width:43px;height:1px;"></div>
<div class="" style="left:2px;top:108px;width:42px;height:1px;background:#fff"></div>
<div class="hl" style="left:1px;top:108px;width:43px;height:14px;">7</div>
<div class="bl" style="left:1px;top:137px;width:43px;height:1px;"></div>
<div class="" style="left:2px;top:123px;width:42px;height:1px;background:#fff"></div>
<div class="hl" style="left:1px;top:123px;width:43px;height:14px;">8</div>
<div class="bl" style="left:1px;top:152px;width:43px;height:1px;"></div>
<div class="" style="left:2px;top:138px;width:42px;height:1px;background:#fff"></div>
<div class="hl" style="left:1px;top:138px;width:43px;height:14px;">9</div>
<div class="bl" style="left:1px;top:167px;width:43px;height:1px;"></div>
<div class="" style="left:2px;top:153px;width:42px;height:1px;background:#fff"></div>
<div class="hl" style="left:1px;top:153px;width:43px;height:14px;">10</div>
<div class="bl" style="left:1px;top:182px;width:43px;height:1px;"></div>
<div class="" style="left:2px;top:168px;width:42px;height:1px;background:#fff"></div>
<div class="hl" style="left:1px;top:168px;width:43px;height:14px;">11</div>
<div class="bl" style="left:1px;top:197px;width:43px;height:1px;"></div>
<div class="" style="left:2px;top:183px;width:42px;height:1px;background:#fff"></div>
<div class="hl" style="left:1px;top:183px;width:43px;height:14px;">12</div>
<div class="bl" style="left:1px;top:212px;width:43px;height:1px;"></div>
<div class="" style="left:2px;top:198px;width:42px;height:1px;background:#fff"></div>
<div class="hl" style="left:1px;top:198px;width:43px;height:14px;">13</div>
<div class="bl" style="left:1px;top:227px;width:43px;height:1px;"></div>
<div class="" style="left:2px;top:213px;width:42px;height:1px;background:#fff"></div>
<div class="hl" style="left:1px;top:213px;width:43px;height:14px;">14</div>
<div class="bl" style="left:1px;top:242px;width:43px;height:1px;"></div>
<div class="" style="left:2px;top:228px;width:42px;height:1px;background:#fff"></div>
<div class="hl" style="left:1px;top:228px;width:43px;height:14px;">15</div>
<div class="bl" style="left:1px;top:257px;width:43px;height:1px;"></div>
<div class="" style="left:2px;top:243px;width:42px;height:1px;background:#fff"></div>
<div class="hl" style="left:1px;top:243px;width:43px;height:14px;">16</div>
<div class="bl" style="left:1px;top:272px;width:43px;height:1px;"></div>
<div class="" style="left:2px;top:258px;width:42px;height:1px;background:#fff"></div>
<div class="hl" style="left:1px;top:258px;width:43px;height:14px;">17</div>
<div class="bl" style="left:1px;top:287px;width:43px;height:1px;"></div>
<div class="" style="left:2px;top:273px;width:42px;height:1px;background:#fff"></div>
<div class="hl" style="left:1px;top:273px;width:43px;height:14px;">18</div>
<div class="bl" style="left:1px;top:302px;width:43px;height:1px;"></div>
<div class="" style="left:2px;top:288px;width:42px;height:1px;background:#fff"></div>
<div class="hl" style="left:1px;top:288px;width:43px;height:14px;">19</div>
<div class="bl" style="left:1px;top:317px;width:43px;height:1px;"></div>
<div class="" style="left:2px;top:303px;width:42px;height:1px;background:#fff"></div>
<div class="hl" style="left:1px;top:303px;width:43px;height:14px;">20</div>
<div class="bl" style="left:1px;top:332px;width:43px;height:1px;"></div>
<div class="" style="left:2px;top:318px;width:42px;height:1px;background:#fff"></div>
<div class="hl" style="left:1px;top:318px;width:43px;height:14px;">21</div>
<div class="bl" style="left:1px;top:347px;width:43px;height:1px;"></div>
<div class="" style="left:2px;top:333px;width:42px;height:1px;background:#fff"></div>
<div class="hl" style="left:1px;top:333px;width:43px;height:14px;">22</div>
<div class="bl" style="left:1px;top:362px;width:43px;height:1px;"></div>
<div class="" style="left:2px;top:348px;width:42px;height:1px;background:#fff"></div>
<div class="hl" style="left:1px;top:348px;width:43px;height:14px;">23</div>
<div class="bl" style="left:1px;top:377px;width:43px;height:1px;"></div>
<div class="" style="left:2px;top:363px;width:42px;height:1px;background:#fff"></div>
<div class="hl" style="left:1px;top:363px;width:43px;height:14px;">24</div>
<div class="bl" style="left:1px;top:392px;width:43px;height:1px;"></div>
<div class="" style="left:2px;top:378px;width:42px;height:1px;background:#fff"></div>
<div class="hl" style="left:1px;top:378px;width:43px;height:14px;">25</div>
<div class="bl" style="left:1px;top:407px;width:43px;height:1px;"></div>
<div class="" style="left:2px;top:393px;width:42px;height:1px;background:#fff"></div>
<div class="hl" style="left:1px;top:393px;width:43px;height:14px;">26</div>
<div class="bl" style="left:1px;top:422px;width:43px;height:1px;"></div>
<div class="" style="left:2px;top:408px;width:42px;height:1px;background:#fff"></div>
<div class="hl" style="left:1px;top:408px;width:43px;height:14px;">27</div>
<div class="bl" style="left:1px;top:437px;width:43px;height:1px;"></div>
<div class="" style="left:2px;top:423px;width:42px;height:1px;background:#fff"></div>
<div class="hl" style="left:1px;top:423px;width:43px;height:14px;">28</div>
<div class="bl" style="left:1px;top:452px;width:43px;height:1px;"></div>
<div class="" style="left:2px;top:438px;width:42px;height:1px;background:#fff"></div>
<div class="hl" style="left:1px;top:438px;width:43px;height:14px;">29</div>
<div class="hl" style="left:45px;top:2px;width:25px;height:15px;">A</div>
<div class="hl" style="left:71px;top:2px;width:35px;height:15px;">B</div>
<div class="hl" style="left:107px;top:2px;width:154px;height:15px;">C</div>
<div class="hl" style="left:262px;top:2px;width:30px;height:15px;">D</div>
<div class="hl" style="left:293px;top:2px;width:50px;height:15px;">E</div>
<div class="hl" style="left:344px;top:2px;width:34px;height:15px;">F</div>
<div class="hl" style="left:379px;top:2px;width:43px;height:15px;">G</div>
<div class="hl" style="left:423px;top:2px;width:63px;height:15px;">H</div>
<div class="hl" style="left:487px;top:2px;width:43px;height:15px;">I</div>
<div class="hl" style="left:531px;top:2px;width:40px;height:15px;">J</div>
<div class="hl" style="left:572px;top:2px;width:27px;height:15px;">K</div>
<div class="hl" style="left:600px;top:2px;width:46px;height:15px;">L</div>
<div class="hl" style="left:647px;top:2px;width:55px;height:15px;">M</div>
<div class="hl" style="left:703px;top:2px;width:48px;height:15px;">N</div>
<div class="hl" style="left:752px;top:2px;width:64px;height:15px;">O</div>
<div class="hl" style="left:817px;top:2px;width:67px;height:15px;">P</div>
<div class="hl" style="left:885px;top:2px;width:53px;height:15px;">Q</div>
<div class="hl" style="left:939px;top:2px;width:25px;height:15px;">R</div>
<div class="hl" style="left:965px;top:2px;width:24px;height:15px;">S</div>
<div class="hl" style="left:990px;top:2px;width:53px;height:15px;">T</div>
<div class="hl" style="left:1044px;top:2px;width:63px;height:15px;">U</div>
<div class="hl" style="left:1108px;top:2px;width:63px;height:15px;">V</div>
<div class="hl" style="left:1172px;top:2px;width:63px;height:15px;">W</div>
<div class="hl" style="left:1236px;top:2px;width:63px;height:15px;">X</div>
<div class="hl" style="left:1300px;top:2px;width:63px;height:15px;">Y</div>
<div class="hl" style="left:1364px;top:2px;width:63px;height:15px;">Z</div>
<div class="ht" style="left:45px;top:33px;width:25px;height:15px;">№</div>
<div class="ht" style="left:45px;top:48px;width:25px;height:15px;">ИГЭ</div>
<div class="ht" style="left:71px;top:33px;width:35px;height:15px;">Усл.</div>
<div class="ht" style="left:71px;top:48px;width:35px;height:15px;">обозн.</div>
<div class="ht" style="left:107px;top:33px;width:154px;height:15px;">Наименование</div>
<div class="ht" style="left:107px;top:48px;width:154px;height:15px;">грунта</div>
<div class="ht" style="left:262px;top:33px;width:30px;height:15px;">Цвет</div>
<div class="ht" style="left:293px;top:33px;width:50px;height:15px;">Модуль</div>
<div class="ht" style="left:293px;top:48px;width:50px;height:15px;">дефор-</div>
<div class="ht" style="left:293px;top:63px;width:50px;height:15px;">мации,</div>
<div class="ht" style="left:293px;top:78px;width:50px;height:15px;">т/м2</div>
<div class="ht" style="left:344px;top:18px;width:34px;height:15px;">Коэф-</div>
<div class="ht" style="left:344px;top:33px;width:34px;height:15px;">фици-</div>
<div class="ht" style="left:344px;top:48px;width:34px;height:15px;">ент</div>
<div class="ht" style="left:344px;top:63px;width:34px;height:15px;">Пуас-</div>
<div class="ht" style="left:344px;top:78px;width:34px;height:15px;">сона</div>
<div class="ht" style="left:379px;top:18px;width:43px;height:15px;">Удель-</div>
<div class="ht" style="left:379px;top:33px;width:43px;height:15px;">ный</div>
<div class="ht" style="left:379px;top:48px;width:43px;height:15px;">вес</div>
<div class="ht" style="left:379px;top:63px;width:43px;height:15px;">грунта,</div>
<div class="ht" style="left:379px;top:78px;width:43px;height:15px;">т/м3</div>
<div class="ht" style="left:423px;top:18px;width:63px;height:15px;">Коэффици-</div>
<div class="ht" style="left:423px;top:33px;width:63px;height:15px;">ент пере-</div>
<div class="ht" style="left:423px;top:48px;width:63px;height:15px;">хода ко 2</div>
<div class="ht" style="left:423px;top:63px;width:63px;height:15px;">модулю де-</div>
<div class="ht" style="left:423px;top:78px;width:63px;height:15px;">формации</div>
<div class="ht" style="left:487px;top:18px;width:43px;height:15px;">Природ-</div>
<div class="ht" style="left:487px;top:33px;width:43px;height:15px;">ная</div>
<div class="ht" style="left:487px;top:48px;width:43px;height:15px;">влаж-</div>
<div class="ht" style="left:487px;top:63px;width:43px;height:15px;">ность,</div>
<div class="ht" style="left:487px;top:78px;width:43px;height:15px;">доли</div>
<div class="ht" style="left:531px;top:18px;width:40px;height:15px;">Показа-</div>
<div class="ht" style="left:531px;top:33px;width:40px;height:15px;">тель</div>
<div class="ht" style="left:531px;top:48px;width:40px;height:15px;">теку-</div>
<div class="ht" style="left:531px;top:63px;width:40px;height:15px;">чести</div>
<div class="ht" style="left:531px;top:78px;width:40px;height:15px;">IL</div>
<div class="ht" style="left:572px;top:33px;width:27px;height:15px;">Вода</div>
<div class="ht" style="left:572px;top:48px;width:27px;height:15px;">Лёсс</div>
<div class="ht" style="left:600px;top:18px;width:46px;height:15px;">Коэффи-</div>
<div class="ht" style="left:600px;top:33px;width:46px;height:15px;">циент</div>
<div class="ht" style="left:600px;top:48px;width:46px;height:15px;">порис-</div>
<div class="ht" style="left:600px;top:63px;width:46px;height:15px;">тости</div>
<div class="ht" style="left:600px;top:78px;width:46px;height:15px;">e</div>
<div class="ht" style="left:647px;top:33px;width:55px;height:15px;">Удельное</div>
<div class="ht" style="left:647px;top:48px;width:55px;height:15px;">сцепление</div>
<div class="ht" style="left:647px;top:63px;width:55px;height:15px;">Rc,</div>
<div class="ht" style="left:647px;top:78px;width:55px;height:15px;">т/м2</div>
<div class="ht" style="left:703px;top:18px;width:48px;height:15px;">Угол</div>
<div class="ht" style="left:703px;top:33px;width:48px;height:15px;">внутрен-</div>
<div class="ht" style="left:703px;top:48px;width:48px;height:15px;">него</div>
<div class="ht" style="left:703px;top:63px;width:48px;height:15px;">трения</div>
<div class="ht" style="left:703px;top:78px;width:48px;height:15px;">Fi, °</div>
<div class="ht" style="left:752px;top:18px;width:64px;height:15px;">Предельное</div>
<div class="ht" style="left:752px;top:33px;width:64px;height:15px;">напряжение</div>
<div class="ht" style="left:752px;top:48px;width:64px;height:15px;">растяжения</div>
<div class="ht" style="left:752px;top:63px;width:64px;height:15px;">Rs,</div>
<div class="ht" style="left:752px;top:78px;width:64px;height:15px;">т/м2</div>
<div class="ht" style="left:817px;top:18px;width:67px;height:15px;">Коэффи-</div>
<div class="ht" style="left:817px;top:33px;width:67px;height:15px;">циент</div>
<div class="ht" style="left:817px;top:48px;width:67px;height:15px;">Савинова</div>
<div class="ht" style="left:817px;top:63px;width:67px;height:15px;">Co,</div>
<div class="ht" style="left:817px;top:78px;width:67px;height:15px;">т/м3</div>
<div class="ht" style="left:887px;top:18px;width:100px;height:15px;text-align:left">Коэффициент</div>
<div class="ht" style="left:887px;top:33px;width:100px;height:15px;text-align:left">пропорцио-</div>
<div class="ht" style="left:887px;top:48px;width:100px;height:15px;text-align:left">нальности K,</div>
<div class="ht" style="left:887px;top:63px;width:100px;height:15px;text-align:left">тс/м**4</div>
<div class="ht" style="left:887px;top:78px;width:100px;height:15px;text-align:left">и код грунта</div>
<div class="c r" style="left:45px;top:93px;width:25px;height:15px;padding-right:2px">1</div>
<div class="c r" style="left:71px;top:93px;width:35px;height:15px;padding-right:2px">11</div>
<div class="c" style="left:107px;top:93px;width:154px;height:15px;padding-left:2px;letter-spacing:0.1px">Насыпной</div>
<div class="" style="left:262px;top:93px;width:31px;height:15px;background:#008080"></div>
<div class="c r" style="left:293px;top:93px;width:50px;height:15px;padding-right:2px">1400</div>
<div class="c r" style="left:344px;top:93px;width:34px;height:15px;padding-right:2px">0.3</div>
<div class="c r" style="left:379px;top:93px;width:43px;height:15px;padding-right:2px">1.9</div>
<div class="c r" style="left:423px;top:93px;width:63px;height:15px;padding-right:2px">5</div>
<div class="c r" style="left:487px;top:93px;width:43px;height:15px;padding-right:2px">0.05</div>
<div class="c r" style="left:531px;top:93px;width:40px;height:15px;padding-right:2px">0.2</div>
<div class="c r" style="left:600px;top:93px;width:46px;height:15px;padding-right:2px">0.7</div>
<div class="c r" style="left:647px;top:93px;width:55px;height:15px;padding-right:2px">0.2</div>
<div class="c r" style="left:703px;top:93px;width:48px;height:15px;padding-right:2px">26</div>
<div class="c r" style="left:752px;top:93px;width:64px;height:15px;padding-right:2px">0.1</div>
<div class="c r" style="left:817px;top:92px;width:67px;height:16px;padding-right:2px;font-size:13px;line-height:15px">500</div>
<div class="c" style="left:885px;top:93px;width:53px;height:15px;padding-left:2px">1820</div>
<div class="c" style="left:939px;top:93px;width:25px;height:15px;padding-left:2px">Z1</div>
<div class="c" style="left:990px;top:93px;height:14px;width:auto;background:#fff;padding:0 2px 0 2px">Плотный песок мелкий e=0.6...0.75, K=2340...1560 тс/м**4</div>
<div class="c r" style="left:45px;top:108px;width:25px;height:15px;padding-right:2px">2</div>
<div class="c r" style="left:71px;top:108px;width:35px;height:15px;padding-right:2px">21</div>
<div class="c" style="left:107px;top:108px;width:154px;height:15px;padding-left:2px;letter-spacing:0.1px">Суглинок тугопластичный</div>
<div class="" style="left:262px;top:108px;width:31px;height:15px;background:#ffff80"></div>
<div class="c r" style="left:293px;top:108px;width:50px;height:15px;padding-right:2px">1400</div>
<div class="c r" style="left:344px;top:108px;width:34px;height:15px;padding-right:2px">0.35</div>
<div class="c r" style="left:379px;top:108px;width:43px;height:15px;padding-right:2px">1.94</div>
<div class="c r" style="left:423px;top:108px;width:63px;height:15px;padding-right:2px">5</div>
<div class="c r" style="left:487px;top:108px;width:43px;height:15px;padding-right:2px">0.21</div>
<div class="c r" style="left:531px;top:108px;width:40px;height:15px;padding-right:2px">0.35</div>
<div class="c r" style="left:600px;top:108px;width:46px;height:15px;padding-right:2px">0.673</div>
<div class="c r" style="left:647px;top:108px;width:55px;height:15px;padding-right:2px">1.16</div>
<div class="c r" style="left:703px;top:108px;width:48px;height:15px;padding-right:2px">20</div>
<div class="c r" style="left:752px;top:108px;width:64px;height:15px;padding-right:2px">0.1</div>
<div class="c r" style="left:817px;top:107px;width:67px;height:16px;padding-right:2px;font-size:13px;line-height:15px">1200</div>
<div class="c" style="left:885px;top:108px;width:53px;height:15px;padding-left:2px">1520</div>
<div class="c" style="left:939px;top:108px;width:25px;height:15px;padding-left:2px">Cs</div>
<div class="c" style="left:990px;top:108px;height:14px;width:auto;background:#fff;padding:0 2px 0 2px">Глина тугопластичная или полутвердая IL=0...0.75, K=1800...1200 тс/м**4</div>
<div class="c r" style="left:45px;top:123px;width:25px;height:15px;padding-right:2px">3</div>
<div class="c r" style="left:71px;top:123px;width:35px;height:15px;padding-right:2px">31</div>
<div class="c" style="left:107px;top:123px;width:154px;height:15px;padding-left:2px;letter-spacing:0.1px">Песок мелкий</div>
<div class="" style="left:262px;top:123px;width:31px;height:15px;background:#ff8080"></div>
<div class="c r" style="left:293px;top:123px;width:50px;height:15px;padding-right:2px">3000</div>
<div class="c r" style="left:344px;top:123px;width:34px;height:15px;padding-right:2px">0.3</div>
<div class="c r" style="left:379px;top:123px;width:43px;height:15px;padding-right:2px">1.69</div>
<div class="c r" style="left:423px;top:123px;width:63px;height:15px;padding-right:2px">5</div>
<div class="c r" style="left:487px;top:123px;width:43px;height:15px;padding-right:2px">0.014</div>
<div class="c r" style="left:531px;top:123px;width:40px;height:15px;padding-right:2px">0</div>
<div class="c r" style="left:600px;top:123px;width:46px;height:15px;padding-right:2px">0.6</div>
<div class="c r" style="left:647px;top:123px;width:55px;height:15px;padding-right:2px">0.23</div>
<div class="c r" style="left:703px;top:123px;width:48px;height:15px;padding-right:2px">35</div>
<div class="c r" style="left:752px;top:123px;width:64px;height:15px;padding-right:2px">0.1</div>
<div class="c r" style="left:817px;top:122px;width:67px;height:16px;padding-right:2px;font-size:13px;line-height:15px">1000</div>
<div class="c" style="left:885px;top:123px;width:53px;height:15px;padding-left:2px">1800</div>
<div class="c" style="left:939px;top:123px;width:25px;height:15px;padding-left:2px">S1</div>
<div class="c" style="left:990px;top:123px;height:14px;width:auto;background:#fff;padding:0 2px 0 2px">Песок мелкий e=0.6...0.75, K=1800...1200 тс/м**4</div>
<div class="c r" style="left:45px;top:138px;width:25px;height:15px;padding-right:2px">4</div>
<div class="c r" style="left:71px;top:138px;width:35px;height:15px;padding-right:2px">41</div>
<div class="c" style="left:107px;top:138px;width:154px;height:15px;padding-left:2px;letter-spacing:0.1px">Суглинок полутвердый</div>
<div class="" style="left:262px;top:138px;width:31px;height:15px;background:#808000"></div>
<div class="c r" style="left:293px;top:138px;width:50px;height:15px;padding-right:2px">2200</div>
<div class="c r" style="left:344px;top:138px;width:34px;height:15px;padding-right:2px">0.35</div>
<div class="c r" style="left:379px;top:138px;width:43px;height:15px;padding-right:2px">2.01</div>
<div class="c r" style="left:423px;top:138px;width:63px;height:15px;padding-right:2px">5</div>
<div class="c r" style="left:487px;top:138px;width:43px;height:15px;padding-right:2px">0.174</div>
<div class="c r" style="left:531px;top:138px;width:40px;height:15px;padding-right:2px">0.19</div>
<div class="c r" style="left:600px;top:138px;width:46px;height:15px;padding-right:2px">0.596</div>
<div class="c r" style="left:647px;top:138px;width:55px;height:15px;padding-right:2px">1.69</div>
<div class="c r" style="left:703px;top:138px;width:48px;height:15px;padding-right:2px">14</div>
<div class="c r" style="left:752px;top:138px;width:64px;height:15px;padding-right:2px">0.1</div>
<div class="c r" style="left:817px;top:137px;width:67px;height:16px;padding-right:2px;font-size:13px;line-height:15px">2000</div>
<div class="c" style="left:885px;top:138px;width:53px;height:15px;padding-left:2px">1648</div>
<div class="c" style="left:939px;top:138px;width:25px;height:15px;padding-left:2px">Cs</div>
<div class="c" style="left:990px;top:138px;height:14px;width:auto;background:#fff;padding:0 2px 0 2px">Глина тугопластичная или полутвердая IL=0...0.75, K=1800...1200 тс/м**4</div>
<div class="c r" style="left:45px;top:153px;width:25px;height:15px;padding-right:2px">5</div>
<div class="c r" style="left:71px;top:153px;width:35px;height:15px;padding-right:2px">42</div>
<div class="c" style="left:107px;top:153px;width:154px;height:15px;padding-left:2px;letter-spacing:0.1px">Суглинок мягкопластичный</div>
<div class="" style="left:262px;top:153px;width:31px;height:15px;background:#800000"></div>
<div class="c r" style="left:293px;top:153px;width:50px;height:15px;padding-right:2px">900</div>
<div class="c r" style="left:344px;top:153px;width:34px;height:15px;padding-right:2px">0.35</div>
<div class="c r" style="left:379px;top:153px;width:43px;height:15px;padding-right:2px">1.97</div>
<div class="c r" style="left:423px;top:153px;width:63px;height:15px;padding-right:2px">5</div>
<div class="c r" style="left:487px;top:153px;width:43px;height:15px;padding-right:2px">0.224</div>
<div class="c r" style="left:531px;top:153px;width:40px;height:15px;padding-right:2px">0.68</div>
<div class="c r" style="left:600px;top:153px;width:46px;height:15px;padding-right:2px">0.668</div>
<div class="c r" style="left:647px;top:153px;width:55px;height:15px;padding-right:2px">0.7</div>
<div class="c r" style="left:703px;top:153px;width:48px;height:15px;padding-right:2px">17</div>
<div class="c r" style="left:752px;top:153px;width:64px;height:15px;padding-right:2px">0.1</div>
<div class="c r" style="left:817px;top:152px;width:67px;height:16px;padding-right:2px;font-size:13px;line-height:15px">1000</div>
<div class="c" style="left:885px;top:153px;width:53px;height:15px;padding-left:2px">840</div>
<div class="c" style="left:939px;top:153px;width:25px;height:15px;padding-left:2px">Cp</div>
<div class="c" style="left:990px;top:153px;height:14px;width:auto;background:#fff;padding:0 2px 0 2px">Глина мягкопластичная IL=0.5...0.75, K=1200...700 тс/м**4</div>
<div class="c r" style="left:45px;top:168px;width:25px;height:15px;padding-right:2px">6</div>
<div class="c r" style="left:71px;top:168px;width:35px;height:15px;padding-right:2px">51</div>
<div class="c" style="left:107px;top:168px;width:154px;height:15px;padding-left:2px;letter-spacing:0.1px">Песок пылеватый</div>
<div class="" style="left:262px;top:168px;width:31px;height:15px;background:#00ffff"></div>
<div class="c r" style="left:293px;top:168px;width:50px;height:15px;padding-right:2px">1700</div>
<div class="c r" style="left:344px;top:168px;width:34px;height:15px;padding-right:2px">0.3</div>
<div class="c r" style="left:379px;top:168px;width:43px;height:15px;padding-right:2px">1.84</div>
<div class="c r" style="left:423px;top:168px;width:63px;height:15px;padding-right:2px">5</div>
<div class="c r" style="left:487px;top:168px;width:43px;height:15px;padding-right:2px">0.154</div>
<div class="c r" style="left:600px;top:168px;width:46px;height:15px;padding-right:2px">0.67</div>
<div class="c r" style="left:647px;top:168px;width:55px;height:15px;padding-right:2px">0.24</div>
<div class="c r" style="left:703px;top:168px;width:48px;height:15px;padding-right:2px">29</div>
<div class="c r" style="left:752px;top:168px;width:64px;height:15px;padding-right:2px">0.1</div>
<div class="c r" style="left:817px;top:167px;width:67px;height:16px;padding-right:2px;font-size:13px;line-height:15px">800</div>
<div class="c" style="left:885px;top:168px;width:53px;height:15px;padding-left:2px">1025</div>
<div class="c" style="left:939px;top:168px;width:25px;height:15px;padding-left:2px">S0</div>
<div class="c" style="left:990px;top:168px;height:14px;width:auto;background:#fff;padding:0 2px 0 2px">Песок пылеватый e=0.6...0.8, K=1200...700 тс/м**4</div>
<div class="c r" style="left:45px;top:183px;width:25px;height:15px;padding-right:2px">7</div>
<div class="c r" style="left:71px;top:183px;width:35px;height:15px;padding-right:2px">52</div>
<div class="c" style="left:107px;top:183px;width:154px;height:15px;padding-left:2px;letter-spacing:0.1px">Песок пылеватый</div>
<div class="" style="left:262px;top:183px;width:31px;height:15px;background:#8080ff"></div>
<div class="c r" style="left:293px;top:183px;width:50px;height:15px;padding-right:2px">1800</div>
<div class="c r" style="left:344px;top:183px;width:34px;height:15px;padding-right:2px">0.3</div>
<div class="c r" style="left:379px;top:183px;width:43px;height:15px;padding-right:2px">1.94</div>
<div class="c r" style="left:423px;top:183px;width:63px;height:15px;padding-right:2px">5</div>
<div class="c r" style="left:487px;top:183px;width:43px;height:15px;padding-right:2px">0.212</div>
<div class="c" style="left:572px;top:183px;width:27px;height:15px;padding-left:2px">W</div>
<div class="c r" style="left:600px;top:183px;width:46px;height:15px;padding-right:2px">0.66</div>
<div class="c r" style="left:647px;top:183px;width:55px;height:15px;padding-right:2px">0.25</div>
<div class="c r" style="left:703px;top:183px;width:48px;height:15px;padding-right:2px">30</div>
<div class="c r" style="left:752px;top:183px;width:64px;height:15px;padding-right:2px">0.1</div>
<div class="c r" style="left:817px;top:182px;width:67px;height:16px;padding-right:2px;font-size:13px;line-height:15px">800</div>
<div class="c" style="left:885px;top:183px;width:53px;height:15px;padding-left:2px">1050</div>
<div class="c" style="left:939px;top:183px;width:25px;height:15px;padding-left:2px">S0</div>
<div class="c" style="left:990px;top:183px;height:14px;width:auto;background:#fff;padding:0 2px 0 2px">Песок пылеватый e=0.6...0.8, K=1200...700 тс/м**4</div>
<div class="c r" style="left:45px;top:198px;width:25px;height:15px;padding-right:2px">8</div>
<div class="c r" style="left:71px;top:198px;width:35px;height:15px;padding-right:2px">61</div>
<div class="c" style="left:107px;top:198px;width:154px;height:15px;padding-left:2px;letter-spacing:0.1px">Песок пылеватый плотный</div>
<div class="" style="left:262px;top:198px;width:31px;height:15px;background:#de98b4"></div>
<div class="c r" style="left:293px;top:198px;width:50px;height:15px;padding-right:2px">2900</div>
<div class="c r" style="left:344px;top:198px;width:34px;height:15px;padding-right:2px">0.3</div>
<div class="c r" style="left:379px;top:198px;width:43px;height:15px;padding-right:2px">1.99</div>
<div class="c r" style="left:423px;top:198px;width:63px;height:15px;padding-right:2px">5</div>
<div class="c r" style="left:487px;top:198px;width:43px;height:15px;padding-right:2px">0.154</div>
<div class="c r" style="left:600px;top:198px;width:46px;height:15px;padding-right:2px">0.54</div>
<div class="c r" style="left:647px;top:198px;width:55px;height:15px;padding-right:2px">0.44</div>
<div class="c r" style="left:703px;top:198px;width:48px;height:15px;padding-right:2px">35</div>
<div class="c r" style="left:752px;top:198px;width:64px;height:15px;padding-right:2px">0.1</div>
<div class="c r" style="left:817px;top:197px;width:67px;height:16px;padding-right:2px;font-size:13px;line-height:15px">800</div>
<div class="c" style="left:885px;top:198px;width:53px;height:15px;padding-left:2px">1560</div>
<div class="c" style="left:939px;top:198px;width:25px;height:15px;padding-left:2px">Z0</div>
<div class="c" style="left:990px;top:198px;height:14px;width:auto;background:#fff;padding:0 2px 0 2px">Плотный песок пылеватый e=0.6...0.8, K=1560...910 тс/м**4</div>
<div class="c r" style="left:45px;top:213px;width:25px;height:15px;padding-right:2px">9</div>
<div class="c r" style="left:71px;top:213px;width:35px;height:15px;padding-right:2px">62</div>
<div class="c" style="left:107px;top:213px;width:154px;height:15px;padding-left:2px;letter-spacing:0.1px">Песок пылеватый плотный</div>
<div class="" style="left:262px;top:213px;width:31px;height:15px;background:#ff00ff"></div>
<div class="c r" style="left:293px;top:213px;width:50px;height:15px;padding-right:2px">3000</div>
<div class="c r" style="left:344px;top:213px;width:34px;height:15px;padding-right:2px">0.3</div>
<div class="c r" style="left:379px;top:213px;width:43px;height:15px;padding-right:2px">2.11</div>
<div class="c r" style="left:423px;top:213px;width:63px;height:15px;padding-right:2px">5</div>
<div class="c r" style="left:487px;top:213px;width:43px;height:15px;padding-right:2px">0.212</div>
<div class="c" style="left:572px;top:213px;width:27px;height:15px;padding-left:2px">W</div>
<div class="c r" style="left:600px;top:213px;width:46px;height:15px;padding-right:2px">0.53</div>
<div class="c r" style="left:647px;top:213px;width:55px;height:15px;padding-right:2px">0.44</div>
<div class="c r" style="left:703px;top:213px;width:48px;height:15px;padding-right:2px">35</div>
<div class="c r" style="left:752px;top:213px;width:64px;height:15px;padding-right:2px">0.1</div>
<div class="c r" style="left:817px;top:212px;width:67px;height:16px;padding-right:2px;font-size:13px;line-height:15px">800</div>
<div class="c" style="left:885px;top:213px;width:53px;height:15px;padding-left:2px">1560</div>
<div class="c" style="left:939px;top:213px;width:25px;height:15px;padding-left:2px">Z0</div>
<div class="c" style="left:990px;top:213px;height:14px;width:auto;background:#fff;padding:0 2px 0 2px">Плотный песок пылеватый e=0.6...0.8, K=1560...910 тс/м**4</div>
<div class="c r" style="left:45px;top:228px;width:25px;height:15px;padding-right:2px">10</div>
<div class="c r" style="left:71px;top:228px;width:35px;height:15px;padding-right:2px">71</div>
<div class="c" style="left:107px;top:228px;width:154px;height:15px;padding-left:2px;letter-spacing:0.1px">Суглинок тугопластичный</div>
<div class="" style="left:262px;top:228px;width:31px;height:15px;background:#ff8080"></div>
<div class="c r" style="left:293px;top:228px;width:50px;height:15px;padding-right:2px">1400</div>
<div class="c r" style="left:344px;top:228px;width:34px;height:15px;padding-right:2px">0.35</div>
<div class="c r" style="left:379px;top:228px;width:43px;height:15px;padding-right:2px">1.84</div>
<div class="c r" style="left:423px;top:228px;width:63px;height:15px;padding-right:2px">5</div>
<div class="c r" style="left:487px;top:228px;width:43px;height:15px;padding-right:2px">0.26</div>
<div class="c r" style="left:531px;top:228px;width:40px;height:15px;padding-right:2px">0.32</div>
<div class="c r" style="left:600px;top:228px;width:46px;height:15px;padding-right:2px">0.751</div>
<div class="c r" style="left:647px;top:228px;width:55px;height:15px;padding-right:2px">1.76</div>
<div class="c r" style="left:703px;top:228px;width:48px;height:15px;padding-right:2px">16</div>
<div class="c r" style="left:752px;top:228px;width:64px;height:15px;padding-right:2px">0.1</div>
<div class="c r" style="left:817px;top:227px;width:67px;height:16px;padding-right:2px;font-size:13px;line-height:15px">1500</div>
<div class="c" style="left:885px;top:228px;width:53px;height:15px;padding-left:2px">1544</div>
<div class="c" style="left:939px;top:228px;width:25px;height:15px;padding-left:2px">Cs</div>
<div class="c" style="left:990px;top:228px;height:14px;width:auto;background:#fff;padding:0 2px 0 2px">Глина тугопластичная или полутвердая IL=0...0.75, K=1800...1200 тс/м**4</div>
<div class="" style="left:969px;top:234px;width:0;height:0;border-left:3.5px solid transparent;border-right:3.5px solid transparent;border-top:3.5px solid #000"></div>
<div class="" style="left:0px;top:0px;width:1412px;height:1px;background:#5a5a5a"></div>
<div class="" style="left:1411px;top:0px;width:1px;height:429px;background:#5a5a5a"></div>
<div class="" style="left:0px;top:428px;width:1412px;height:1px;background:#5a5a5a"></div>
<div class="" style="left:0px;top:0px;width:1px;height:429px;background:#5a5a5a"></div>
</div>
<div id="notes"><span style="letter-spacing:-0.02px">Примечания: значения Rc, Fi, Rs в расчете коэффициентов постели C1, C2 не используются, но задаются для</span><br><span style="letter-spacing:0.075px">последующего экспорта в жесткости ЛИРА-САПР. Значения IL и K используются для расчета жесткости свай (КЭ 57)</span></div>
<svg class="abs" style="left:1100px;top:649px" width="220" height="84" viewBox="1100 649 220 84"><polygon points="1100,649 1315,649 1315,674 1317.5,674 1317.5,681 1315,681 1315,690 1196,690.5 1100,730.6" fill="#0000c8"/><path d="M1227 690v2h1v-2zM1232 690v2h1v-2zM1236 690v1h1v-2zM1241 690v3h1v-2zM1260 690v2h1v-2zM1278 690v2h1v-2zM1288 690v3h1v-2zM1297 690v1h1v-2zM1301 690v1h1v-2zM1306 690v3h1v-2z" fill="#0000c8"/><path d="M1149 651h2v2h-2zM1153 651h2v2h-2zM1158 650h3v2h-3zM1162 650h2v3h-2zM1167 651h3v3h-3zM1172 651h3v2h-3zM1177 650h2v2h-2zM1181 651h3v3h-3zM1186 650h3v2h-3zM1190 651h3v3h-3zM1196 650h3v2h-3zM1199 651h2v2h-2zM1204 651h3v3h-3zM1209 651h3v2h-3zM1214 651h2v2h-2zM1218 651h3v3h-3zM1223 650h3v3h-3zM1226 650h3v2h-3zM1231 651h3v2h-3zM1236 650h3v3h-3zM1240 650h3v3h-3zM1251 650h3v2h-3zM1255 651h3v2h-3zM1259 651h2v3h-2zM1264 651h2v2h-2zM1268 651h2v2h-2zM1273 651h2v2h-2zM1277 651h2v2h-2zM1282 651h3v2h-3zM1287 651h2v2h-2zM1291 651h2v2h-2zM1296 651h2v2h-2zM1300 651h3v3h-3zM1148 655h3v3h-3zM1154 655h3v3h-3zM1158 655h3v2h-3zM1163 655h3v3h-3zM1168 656h3v2h-3zM1173 656h3v2h-3zM1177 655h3v3h-3zM1182 656h3v3h-3zM1186 655h3v3h-3zM1190 655h3v2h-3zM1196 656h2v3h-2zM1205 655h3v3h-3zM1208 656h3v3h-3zM1214 656h3v2h-3zM1218 655h3v3h-3zM1222 656h3v2h-3zM1228 656h3v3h-3zM1236 656h3v3h-3zM1241 655h3v3h-3zM1246 655h3v2h-3zM1249 655h3v2h-3zM1254 655h2v2h-2zM1259 656h2v2h-2zM1264 655h3v2h-3zM1268 655h2v2h-2zM1273 655h2v2h-2zM1277 655h2v3h-2zM1282 655h2v2h-2zM1287 655h3v2h-3zM1291 655h2v2h-2zM1296 655h2v3h-2zM1300 655h2v2h-2zM1309 655h3v3h-3zM1150 661h3v2h-3zM1154 661h3v2h-3zM1159 660h3v2h-3zM1162 660h3v3h-3zM1167 660h3v2h-3zM1173 660h2v2h-2zM1176 661h3v2h-3zM1182 661h3v3h-3zM1187 660h3v2h-3zM1191 660h2v3h-2zM1200 660h3v3h-3zM1213 660h3v3h-3zM1217 660h2v2h-2zM1223 660h3v2h-3zM1232 661h3v2h-3zM1246 660h2v2h-2zM1250 660h3v2h-3zM1254 660h3v3h-3zM1259 660h3v2h-3zM1264 660h3v2h-3zM1268 660h2v3h-2zM1273 660h2v3h-2zM1277 660h2v2h-2zM1282 660h2v2h-2zM1287 660h2v2h-2zM1291 660h2v2h-2zM1296 660h3v2h-3zM1300 660h2v2h-2zM1309 660h3v2h-3zM1150 665h3v2h-3zM1158 665h2v3h-2zM1163 665h3v3h-3zM1167 664h2v2h-2zM1172 666h3v2h-3zM1176 666h3v3h-3zM1180 666h3v2h-3zM1186 664h3v3h-3zM1191 665h3v2h-3zM1195 666h2v2h-2zM1199 665h3v3h-3zM1203 666h3v3h-3zM1214 665h3v3h-3zM1217 665h3v3h-3zM1227 664h2v3h-2zM1232 665h3v3h-3zM1236 665h3v2h-3zM1246 664h3v3h-3zM1249 665h3v2h-3zM1264 665h2v2h-2zM1268 665h2v3h-2zM1273 665h2v2h-2zM1277 665h3v3h-3zM1282 665h3v2h-3zM1287 665h3v2h-3zM1291 665h2v2h-2zM1296 665h2v2h-2zM1300 665h2v2h-2zM1309 665h3v2h-3zM1149 669h3v3h-3zM1154 671h3v3h-3zM1158 670h3v2h-3zM1163 670h3v2h-3zM1167 670h3v3h-3zM1177 671h3v3h-3zM1181 671h3v3h-3zM1185 669h2v3h-2zM1191 669h3v2h-3zM1194 670h3v3h-3zM1199 670h2v2h-2zM1205 669h3v2h-3zM1208 670h3v3h-3zM1223 669h3v3h-3zM1232 670h2v2h-2zM1237 669h3v2h-3zM1240 670h3v2h-3zM1245 670h3v2h-3zM1249 669h2v2h-2zM1255 671h2v2h-2zM1264 670h2v3h-2zM1273 670h2v3h-2zM1277 670h2v2h-2zM1282 670h2v2h-2zM1287 670h3v2h-3zM1291 670h2v2h-2zM1296 670h2v2h-2zM1300 670h2v2h-2zM1309 670h3v2h-3zM1150 674h2v3h-2zM1153 676h2v3h-2zM1159 676h3v2h-3zM1163 675h2v2h-2zM1167 675h3v3h-3zM1173 675h3v3h-3zM1177 675h3v2h-3zM1181 675h2v2h-2zM1185 675h2v3h-2zM1200 675h2v3h-2zM1204 675h3v3h-3zM1227 675h2v2h-2zM1231 675h2v2h-2zM1245 675h3v3h-3zM1250 676h3v3h-3zM1264 675h2v3h-2zM1268 675h2v2h-2zM1273 675h2v2h-2zM1277 675h3v2h-3zM1282 675h3v2h-3zM1287 675h2v2h-2zM1291 675h2v3h-2zM1296 675h2v2h-2zM1300 675h2v2h-2zM1309 675h3v2h-3zM1149 680h3v3h-3zM1153 681h3v2h-3zM1163 680h3v3h-3zM1167 680h3v3h-3zM1172 679h3v3h-3zM1177 680h3v2h-3zM1181 679h3v3h-3zM1186 680h2v2h-2zM1195 680h2v2h-2zM1208 679h3v3h-3zM1214 679h3v2h-3zM1240 680h3v3h-3zM1246 680h3v2h-3zM1264 680h2v2h-2zM1268 680h2v2h-2zM1273 680h2v2h-2zM1277 680h2v2h-2zM1282 680h3v2h-3zM1287 680h2v2h-2zM1291 680h3v2h-3zM1296 680h2v2h-2zM1300 680h2v2h-2zM1309 680h3v2h-3zM1154 685h3v2h-3zM1158 685h3v2h-3zM1163 685h2v3h-2zM1168 684h2v2h-2zM1173 685h3v2h-3zM1177 684h3v3h-3zM1182 684h2v2h-2zM1185 685h3v3h-3zM1190 685h3v3h-3zM1195 684h2v3h-2zM1203 685h3v2h-3zM1208 685h3v2h-3zM1212 684h2v2h-2zM1217 685h3v2h-3zM1223 685h2v3h-2zM1227 684h2v2h-2zM1232 684h2v2h-2zM1237 684h3v3h-3zM1240 684h3v2h-3zM1245 684h3v3h-3zM1249 684h3v2h-3zM1255 685h3v2h-3zM1259 684h3v3h-3zM1264 685h2v2h-2zM1268 685h2v2h-2zM1273 685h2v2h-2zM1277 685h3v2h-3zM1282 685h2v2h-2zM1287 685h2v2h-2zM1291 685h2v3h-2zM1296 685h2v2h-2zM1300 685h2v2h-2zM1309 685h3v2h-3zM1154 690h2v3h-2zM1158 690h3v3h-3zM1163 690h3v2h-3zM1168 690h3v3h-3zM1172 690h3v2h-3zM1182 689h2v2h-2zM1149 695h3v2h-3zM1154 694h3v3h-3zM1157 693h2v3h-2zM1162 694h3v2h-3zM1167 694h3v2h-3zM1150 700h2v2h-2zM1153 698h3v3h-3zM1158 698h3v2h-3zM1149 703h3v2h-3z" fill="#e4e4fa" shape-rendering="crispEdges"/></svg>
<div class="abs" style="left:919px;top:827px;width:7px;height:7px;background:#00c400;border:1px solid #000"></div>
<div class="abs" style="left:928px;top:819px;font-size:11px;font-weight:bold;color:#008000;line-height:11px">1</div>
<div class="abs" style="left:1331px;top:768px;width:7px;height:7px;background:#00c400;border:1px solid #000"></div>
<div class="abs" style="left:1340px;top:760px;font-size:11px;font-weight:bold;color:#008000;line-height:11px">2</div>
<div id="dlg"><div class="tt"><span>Коэффициент Co для формулы Савинова</span>
<svg style="position:absolute;left:444px;top:9px" width="11" height="11" viewBox="0 0 11 11"><path d="M0.300 0.300l9.700 9.700M10 0.300l-9.700 9.700" stroke="#000" stroke-width="1.100"/></svg></div>
<span class="dl" style="left:31px;top:42px;width:400px;text-align:center">Значение коэффициента жесткости упругого основания</span>
<span class="dl" style="left:31px;top:55px;width:400px;text-align:center">при удельном давлении Po = 2 т/м2 *</span>
<div style="left:12px;top:74px;width:366px;height:1px;background:#a0a0a0"></div>
<div style="left:379px;top:74px;width:71px;height:1px;background:#a0a0a0"></div>
<div style="left:12px;top:100px;width:366px;height:1px;background:#a0a0a0"></div>
<div style="left:379px;top:100px;width:71px;height:1px;background:#a0a0a0"></div>
<div style="left:377px;top:74px;width:1px;height:171px;background:#a0a0a0"></div>
<div style="left:378px;top:74px;width:1px;height:171px;background:#fff"></div>
<div style="left:12px;top:248px;width:438px;height:1px;background:#a0a0a0"></div>
<div style="left:12px;top:249px;width:438px;height:1px;background:#fff"></div>
<span class="dl" style="left:22px;top:81px;">Грунты</span>
<span class="dl" style="left:398px;top:81px;letter-spacing:0.3px">Co, т/м3</span>
<span class="dl" style="left:22px;top:106px;">Пески:</span>
<span class="dl" style="left:22px;top:119px;">а) пылеватые, очень влажные и насыщенные водой</span>
<span class="dl" style="left:22px;top:132px;">б) мелкие, независимо от плотности и влажности</span>
<span class="dl" style="left:22px;top:145px;letter-spacing:0.16px">в) средней крупности, крупные и гравелистые</span>
<span class="dl" style="left:22px;top:158px;">независимо от плотности и влажности</span>
<span class="dl" style="left:22px;top:171px;">Глины, суглинки и супеси:</span>
<span class="dl" style="left:22px;top:184px;letter-spacing:0">а) находящиеся в пластическом состоянии, близком к границе</span>
<span class="dl" style="left:22px;top:197px;">текучести</span>
<span class="dl" style="left:22px;top:210px;">б) пластичные</span>
<span class="dl" style="left:22px;top:223px;">в) твердые</span>
<span class="dl" style="left:383px;top:117px;letter-spacing:-0.05px">800 – 1000</span>
<span class="dl" style="left:384px;top:130px;letter-spacing:-0.05px">1000 – 1200</span>
<span class="dl" style="left:384px;top:143px;letter-spacing:-0.05px">1200 – 1600</span>
<span class="dl" style="left:383px;top:182px;letter-spacing:-0.05px">500 – 1000</span>
<span class="dl" style="left:384px;top:208px;letter-spacing:-0.05px">1000 – 2000</span>
<span class="dl" style="left:384px;top:221px;letter-spacing:-0.05px">2000 – 3000</span>
<span class="dl" style="left:14px;top:252px;word-spacing:1.5px">* Цытович, Н.А. Механика грунтов. - Москва: Госстройиздат. 1963. - С. 482.</span>
<span class="dl" style="left:69px;top:291px;">Укажите наиболее подходящее значение Co:</span>
<div style="left:314px;top:285px;width:60px;height:22px;background:#fff;border:1px solid #0078d7"></div>
<span class="dl" style="left:319px;top:288px;background:#0078d7;color:#fff;padding:0 1px;height:15px;line-height:15px">1500</span>
<span class="dl" style="left:381px;top:289px;">т/м3</span>
<div style="left:298px;top:343px;width:73px;height:21px;background:#e1e1e1;border:2px solid #0078d7"></div>
<span class="dl" style="left:298px;top:347px;width:73px;text-align:center">OK</span>
<div style="left:379px;top:343px;width:73px;height:21px;background:#e1e1e1;border:1px solid #adadad"></div>
<span class="dl" style="left:378px;top:347px;width:73px;text-align:center;letter-spacing:-0.1px">Отмена</span>
</div>
</body></html>
